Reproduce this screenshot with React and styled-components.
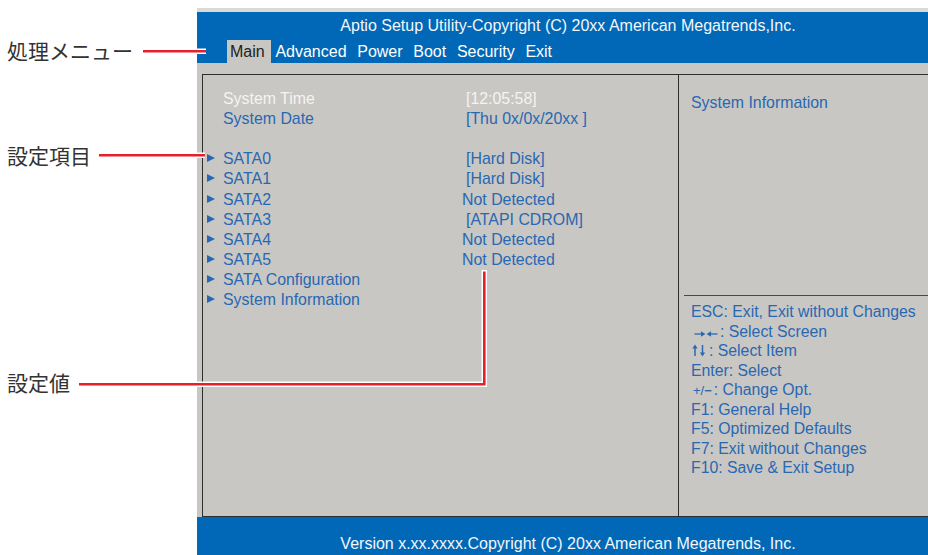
import React from 'react'
import styled, { createGlobalStyle } from 'styled-components'

const GlobalStyle = createGlobalStyle`
    html, body {
        margin: 0;
        padding: 0;
        background: #fff;
    }
`

const BLUE = '#0068b6'
const PANEL = '#c9c7c3'
const INK = '#2868b2'
const RED = '#e4202a'

const menuItems = ['Main', 'Advanced', 'Power', 'Boot', 'Security', 'Exit']

const settingRows = [
    { label: 'System Time', value: '[12:05:58]', light: true, indent: true },
    { label: 'System Date', value: '[Thu 0x/0x/20xx ]', indent: true },
    { blank: true },
    { label: 'SATA0', value: '[Hard Disk]', arrow: true, indent: true },
    { label: 'SATA1', value: '[Hard Disk]', arrow: true, indent: true },
    { label: 'SATA2', value: 'Not Detected', arrow: true },
    { label: 'SATA3', value: '[ATAPI CDROM]', arrow: true, indent: true },
    { label: 'SATA4', value: 'Not Detected', arrow: true },
    { label: 'SATA5', value: 'Not Detected', arrow: true },
    { label: 'SATA Configuration', arrow: true },
    { label: 'System Information', arrow: true },
]

const callouts = [
    { text: '処理メニュー', y: 50 },
    { text: '設定項目', y: 155 },
    { text: '設定値', y: 382 },
]

// small key glyphs drawn the way the BIOS font shows them
const LeftRightKeys = () => (
    <KeyIcon width="26" height="8" viewBox="0 0 26 8" $w={26}>
        <g fill={INK} stroke={INK}>
            <line x1="1.5" y1="4" x2="9" y2="4" strokeWidth="1.3" />
            <polygon points="8,1.2 12.4,4 8,6.8" stroke="none" />
            <polygon points="13.6,4 18,1.2 18,6.8" stroke="none" />
            <line x1="17" y1="4" x2="24.5" y2="4" strokeWidth="1.3" />
        </g>
    </KeyIcon>
)

const UpDownKeys = () => (
    <KeyIcon width="16" height="13" viewBox="0 0 16 13" $w={16}>
        <g fill={INK} stroke={INK}>
            <polygon points="3,0.5 5.6,4.5 0.4,4.5" stroke="none" />
            <line x1="3" y1="4" x2="3" y2="12" strokeWidth="1.5" />
            <line x1="10.5" y1="1" x2="10.5" y2="9" strokeWidth="1.5" />
            <polygon points="7.9,8.5 13.1,8.5 10.5,12.5" stroke="none" />
        </g>
    </KeyIcon>
)

const App = () => {
    return (
        <Page>
            <GlobalStyle />
            <Gutter />
            <Screen>
                <Header>
                    <Title>Aptio Setup Utility-Copyright (C) 20xx American Megatrends,Inc.</Title>
                    <MenuBar>
                        {menuItems.map((item, i) => (
                            <MenuItem key={item} $active={i === 0}>{item}</MenuItem>
                        ))}
                    </MenuBar>
                </Header>
                <Body>
                    <Frame>
                        <SettingsPane>
                            {settingRows.map((row, i) => (
                                row.blank ? <Row key={i} /> : (
                                    <Row key={i}>
                                        <ArrowCell>{row.arrow && <Arrow />}</ArrowCell>
                                        <ItemLabel $light={row.light}>{row.label}</ItemLabel>
                                        <ItemValue $light={row.light} $indent={row.indent}>{row.value}</ItemValue>
                                    </Row>
                                )
                            ))}
                        </SettingsPane>
                        <HelpPane>
                            <InfoBox>System Information</InfoBox>
                            <KeyList>
                                <KeyLine>ESC: Exit, Exit without Changes</KeyLine>
                                <KeyLine $indent={2}><LeftRightKeys />: Select Screen</KeyLine>
                                <KeyLine $indent={1}><UpDownKeys />: Select Item</KeyLine>
                                <KeyLine>Enter: Select</KeyLine>
                                <KeyLine $indent={2}><PlusMinus>+/<b>−</b></PlusMinus>: Change Opt.</KeyLine>
                                <KeyLine>F1: General Help</KeyLine>
                                <KeyLine>F5: Optimized Defaults</KeyLine>
                                <KeyLine>F7: Exit without Changes</KeyLine>
                                <KeyLine>F10: Save &amp; Exit Setup</KeyLine>
                            </KeyList>
                        </HelpPane>
                    </Frame>
                </Body>
                <Footer>Version x.xx.xxxx.Copyright (C) 20xx American Megatrends, Inc.</Footer>
            </Screen>

            {callouts.map(c => (
                <CalloutLabel key={c.text} $y={c.y}>{c.text}</CalloutLabel>
            ))}
            <Leaders width="928" height="555" viewBox="0 0 928 555">
                <g fill="none" strokeLinecap="butt" strokeLinejoin="miter">
                    <g stroke="#fff" strokeWidth="5.5">
                        <polyline points="143,51.3 206,51.3" />
                        <polyline points="99,155.3 205,155.3" />
                        <polyline points="79,384.2 484.3,384.2 484.3,270" />
                    </g>
                    <g stroke={RED} strokeWidth="2.6">
                        <polyline points="143,51.3 206,51.3" />
                        <polyline points="99,155.3 205,155.3" />
                        <polyline points="79,384.2 484.3,384.2 484.3,271.5" />
                    </g>
                </g>
            </Leaders>
        </Page>
    )
}

export default App


// # Styled-components
const Page = styled.div`
    position: relative;
    width: 928px;
    height: 555px;
    overflow: hidden;
    display: flex;
    background: #fff;
    font-family: "Liberation Sans", Arial, Helvetica, sans-serif;
`

const Gutter = styled.div`
    width: 197px;
    flex-shrink: 0;
`

const Screen = styled.div`
    width: 742px;
    flex-shrink: 0;
    margin-top: 8px;
    display: flex;
    flex-direction: column;
    border-top: 4px solid #d9d9d7;
`

const Header = styled.div`
    height: 51px;
    background: ${BLUE};
    display: flex;
    flex-direction: column;
    color: #fff;
`

const Title = styled.div`
    height: 28px;
    display: flex;
    align-items: center;
    justify-content: center;
    font-size: 16px;
    color: #f2f6fb;
`

const MenuBar = styled.div`
    height: 23px;
    display: flex;
    align-items: stretch;
    padding-left: 30px;
    gap: 1.7px;
`

const MenuItem = styled.span`
    display: flex;
    align-items: center;
    padding: 0 6px 0 3px;
    font-size: 16px;
    color: ${p => p.$active ? '#222' : '#fff'};
    background: ${p => p.$active ? PANEL : 'transparent'};
`

const Body = styled.div`
    flex: 1;
    background: ${PANEL};
    padding: 11px 0 0 5px;
    display: flex;
`

const Frame = styled.div`
    flex: 1;
    display: grid;
    grid-template-columns: 475px 1fr;
    border: 1px solid #2e2e2e;
    border-right: none;
`

const SettingsPane = styled.div`
    padding-top: 14px;
    display: flex;
    flex-direction: column;
`

const Row = styled.div`
    height: 20.1px;
    display: grid;
    grid-template-columns: 20px 239px 1fr;
    align-items: center;
    font-size: 15.9px;
    line-height: 20px;
`

const ArrowCell = styled.span`
    display: flex;
    align-items: center;
    padding-left: 4px;
    height: 100%;
`

const Arrow = styled.span`
    width: 0;
    height: 0;
    margin-top: -2px;
    border-left: 8.5px solid ${INK};
    border-top: 4.3px solid transparent;
    border-bottom: 4.3px solid transparent;
`

const ItemLabel = styled.span`
    color: ${p => p.$light ? '#f4f4f2' : INK};
    white-space: nowrap;
`

const ItemValue = styled.span`
    color: ${p => p.$light ? '#f4f4f2' : INK};
    padding-left: ${p => p.$indent ? '4px' : '0'};
    white-space: nowrap;
`

const HelpPane = styled.div`
    border-left: 1px solid #2e2e2e;
    display: flex;
    flex-direction: column;
`

const InfoBox = styled.div`
    height: 202px;
    padding: 18px 0 0 7px;
    margin-left: 5px;
    font-size: 15.9px;
    line-height: 20px;
    color: ${INK};
    border-bottom: 1px solid #4a4a4a;
`

const KeyList = styled.div`
    padding: 6px 0 0 12px;
    display: flex;
    flex-direction: column;
`

const KeyLine = styled.div`
    height: 19.5px;
    line-height: 19.5px;
    font-size: 15.8px;
    color: ${INK};
    white-space: nowrap;
    padding-left: ${p => p.$indent || 0}px;
`

const KeyIcon = styled.svg`
    display: inline-block;
    width: ${p => p.$w}px;
    vertical-align: -1px;
    margin-right: 1px;
`

const PlusMinus = styled.span`
    font-size: 13px;
    margin-right: 2px;

    b {
        font-weight: 700;
    }
`

const Footer = styled.div`
    height: 38px;
    box-sizing: border-box;
    padding-top: 18px;
    line-height: 18px;
    background: ${BLUE};
    text-align: center;
    font-size: 16px;
    color: #f2f6fb;
`

const CalloutLabel = styled.span`
    position: absolute;
    left: 7px;
    top: ${p => p.$y - 15}px;
    line-height: 30px;
    font-size: 21px;
    color: #333;
    font-family: "Noto Sans CJK JP", "Noto Sans", sans-serif;
`

const Leaders = styled.svg`
    position: absolute;
    left: 0;
    top: 0;
    pointer-events: none;
`
